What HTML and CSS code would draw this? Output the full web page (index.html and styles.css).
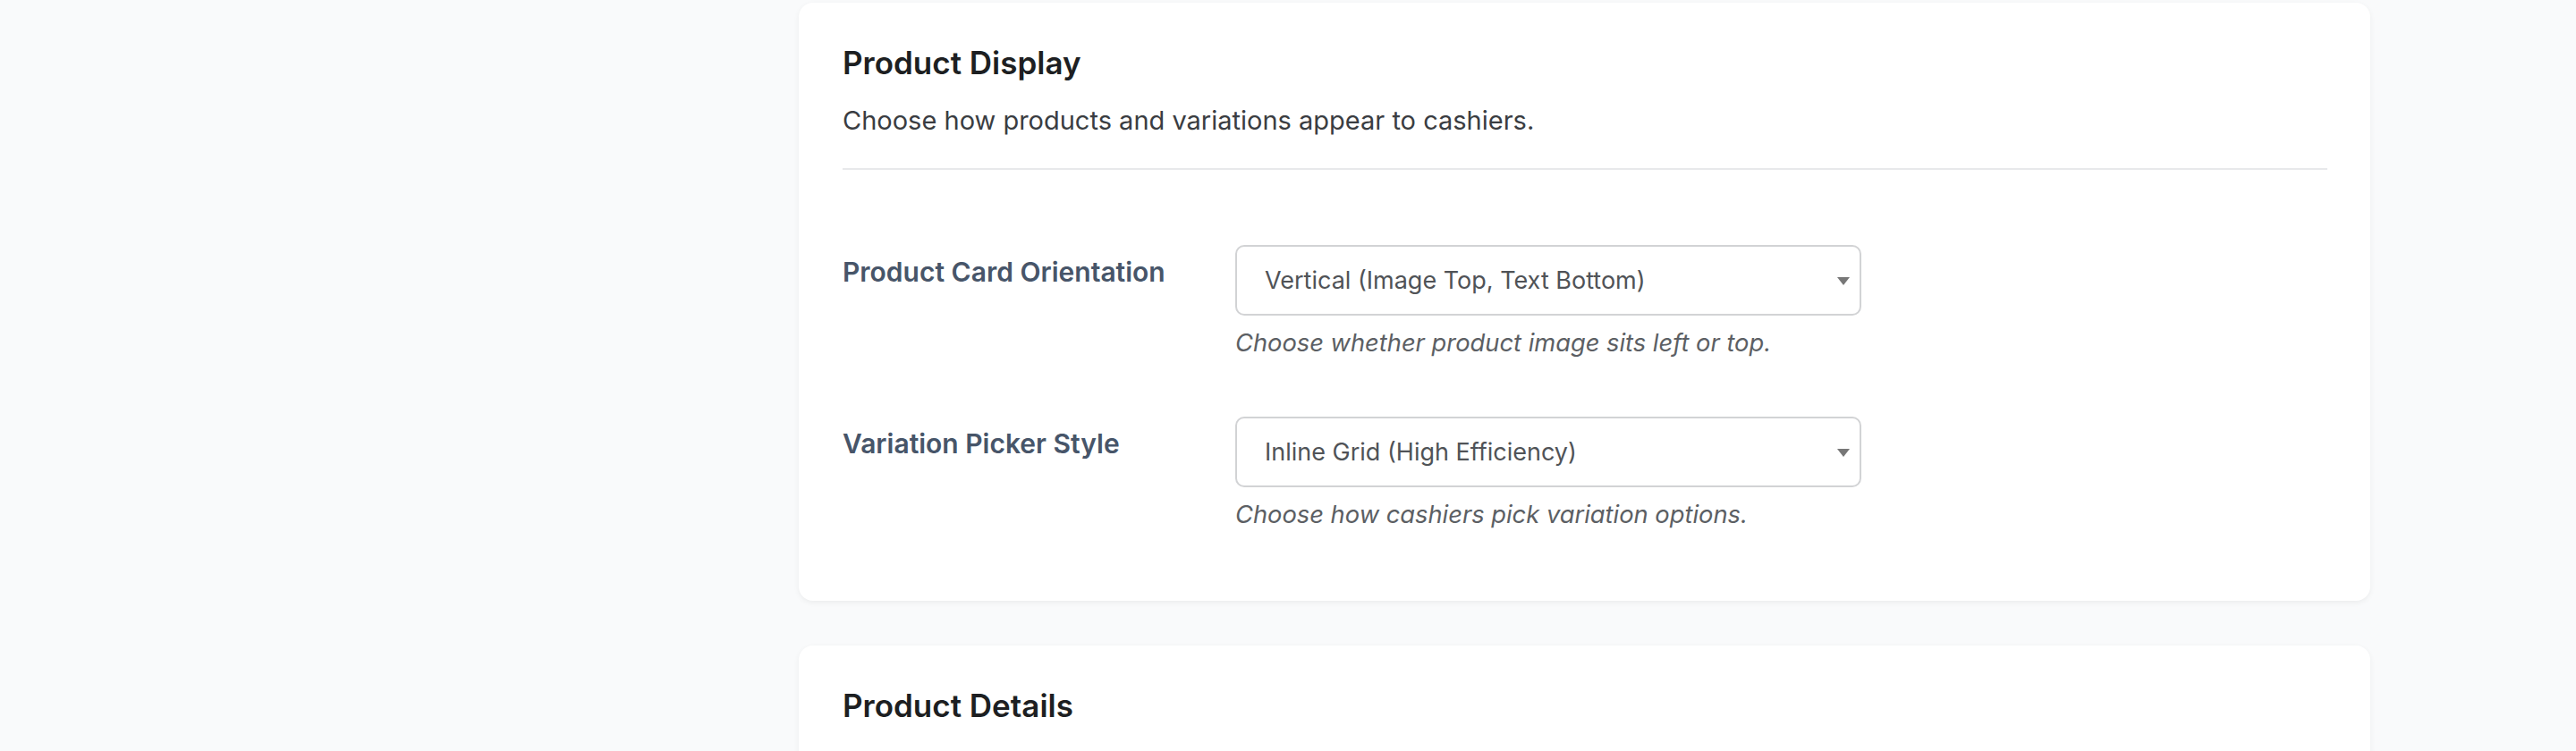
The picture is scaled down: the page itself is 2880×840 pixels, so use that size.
FILE: index.html
```html
<!DOCTYPE html>
<html lang="en">
<head>
    <meta charset="UTF-8">
    <meta name="viewport" content="width=device-width, initial-scale=1.0">
    <title>Settings</title>
    <link rel="stylesheet" href="styles.css">
</head>
<body>
    <div class="layout">
        <aside class="sidebar"></aside>
        <main class="content">
            <section class="card">
                <div class="card-header">
                    <h2>Product Display</h2>
                    <p>Choose how products and variations appear to cashiers.</p>
                </div>

                <div class="form-row">
                    <label for="orientation">Product Card Orientation</label>
                    <div class="field">
                        <div class="select-wrap">
                            <select id="orientation">
                                <option>Vertical (Image Top, Text Bottom)</option>
                                <option>Horizontal (Image Left, Text Right)</option>
                            </select>
                        </div>
                        <p class="help">Choose whether product image sits left or top.</p>
                    </div>
                </div>

                <div class="form-row">
                    <label for="picker">Variation Picker Style</label>
                    <div class="field">
                        <div class="select-wrap">
                            <select id="picker">
                                <option>Inline Grid (High Efficiency)</option>
                                <option>Popup Modal</option>
                            </select>
                        </div>
                        <p class="help">Choose how cashiers pick variation options.</p>
                    </div>
                </div>
            </section>

            <section class="card">
                <div class="card-header">
                    <h2>Product Details</h2>
                </div>
            </section>
        </main>
    </div>
</body>
</html>
```

FILE: styles.css
```css
body {
    font-family: Inter, "Noto Sans", Arial, sans-serif;
    margin: 0;
    padding: 0;
    background-color: #f9fafb;
    color: #1f2328;
}

.layout {
    display: grid;
    grid-template-columns: 663px 1fr;
    min-height: 100vh;
}

.content {
    padding: 3px 230px 0 230px;
    display: flex;
    flex-direction: column;
    gap: 50px;
}

.card {
    background: #fff;
    border-radius: 16px;
    padding: 48px 48px 80px 49px;
    box-shadow: 0 2px 6px rgba(0, 0, 0, 0.06);
}

.card-header {
    border-bottom: 2px solid #e8e9eb;
    padding-bottom: 35px;
    margin-bottom: 84px;
}

.card-header h2 {
    margin: 0;
    font-size: 35px;
    font-weight: 600;
    line-height: 38px;
    color: #1d1f22;
}

.card-header p {
    margin: 28px 0 0;
    font-size: 29px;
    line-height: 36px;
    color: #3a3d42;
}

.form-row {
    display: grid;
    grid-template-columns: 439px 700px;
    margin-bottom: 66px;
}

.form-row:last-child {
    margin-bottom: 0;
}

.form-row label {
    font-size: 30px;
    font-weight: 600;
    color: #475569;
    padding-top: 12px;
}

.select-wrap {
    position: relative;
}

.select-wrap::after {
    content: "";
    position: absolute;
    right: 13px;
    top: 36px;
    border-left: 7px solid transparent;
    border-right: 7px solid transparent;
    border-top: 9px solid #777;
    pointer-events: none;
}

select {
    appearance: none;
    -webkit-appearance: none;
    width: 100%;
    height: 79px;
    padding: 0 40px 0 31px;
    border: 2px solid #d2d3d5;
    border-radius: 10px;
    background: #fff;
    font-family: inherit;
    font-size: 27px;
    color: #505357;
}

.help {
    margin: 14px 0 0;
    font-size: 27.3px;
    font-style: italic;
    color: #5c5f64;
}
```
